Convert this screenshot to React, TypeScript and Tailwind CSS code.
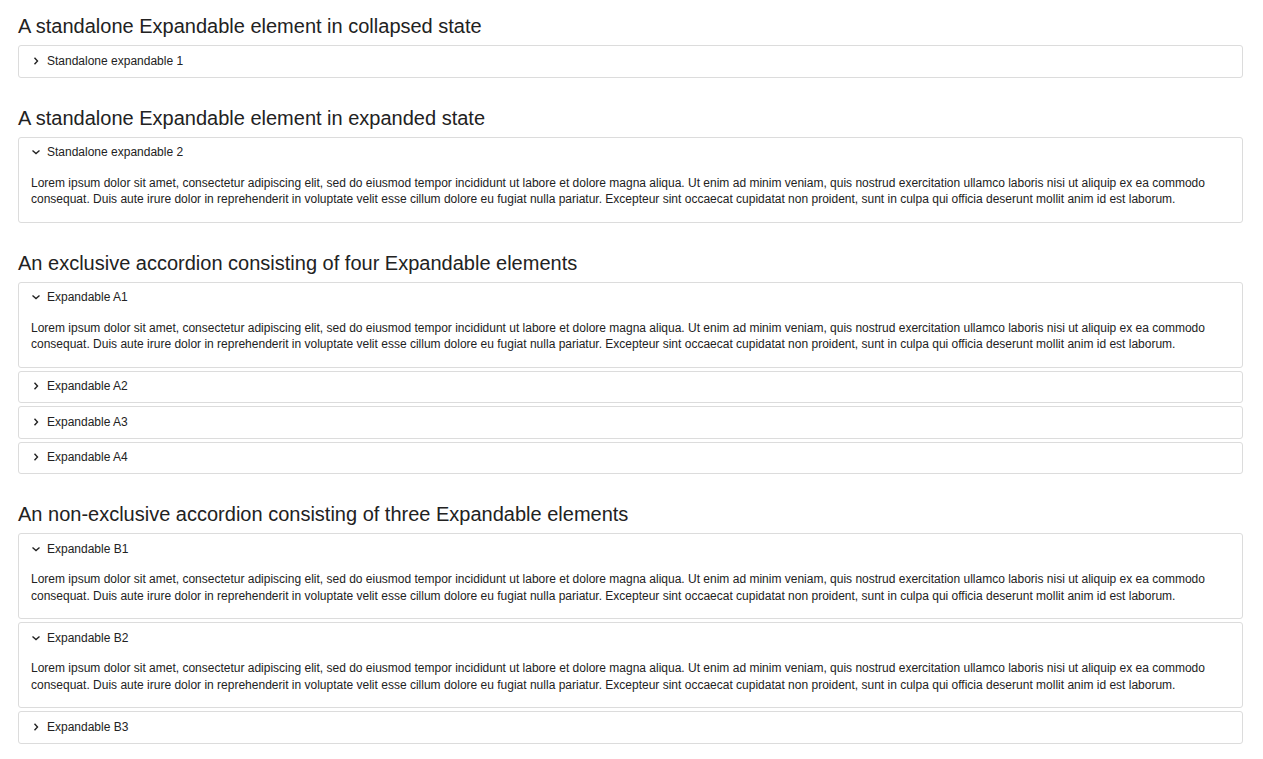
import React from 'react';

const LOREM =
  'Lorem ipsum dolor sit amet, consectetur adipiscing elit, sed do eiusmod tempor incididunt ut labore et dolore magna aliqua. Ut enim ad minim veniam, quis nostrud exercitation ullamco laboris nisi ut aliquip ex ea commodo consequat. Duis aute irure dolor in reprehenderit in voluptate velit esse cillum dolore eu fugiat nulla pariatur. Excepteur sint occaecat cupidatat non proident, sunt in culpa qui officia deserunt mollit anim id est laborum.';

const Chevron = ({ open }: { open: boolean }) => (
  <svg width="10" height="10" viewBox="0 0 10 10" className="shrink-0" aria-hidden="true">
    {open ? (
      <path d="M1.5 3.5 L5 6.5 L8.5 3.5" fill="none" stroke="#222" strokeWidth="1.4" />
    ) : (
      <path d="M3.5 1.8 L6.5 5 L3.5 8.2" fill="none" stroke="#222" strokeWidth="1.4" />
    )}
  </svg>
);

const Expandable = ({ title, open }: { title: string; open?: boolean }) => (
  <div className="border border-[#dcdcdc] rounded-[3px] bg-white">
    <div className="h-[30.5px] flex items-center pl-[12px] pb-[1px] gap-[6px] text-[12px] text-[#222]">
      <Chevron open={!!open} />
      <span>{title}</span>
    </div>
    {open && (
      <div className="pl-[12px] pr-[12px] pt-[6.5px] pb-[14px] text-[12px] leading-[16.5px] text-[#222]">{LOREM}</div>
    )}
  </div>
);

const Section = ({ heading, children }: { heading: string; children: React.ReactNode }) => (
  <section className="mb-[28px]">
    <h2 className="text-[20px] leading-[24px] text-[#222] mb-[7px]">{heading}</h2>
    <div className="flex flex-col gap-[3px]">{children}</div>
  </section>
);

export default function App() {
  return (
    <div className="min-h-screen bg-white pl-[18px] pr-[20px] pt-[14px] font-['Liberation_Sans',Arial,sans-serif]">
      <Section heading="A standalone Expandable element in collapsed state">
        <Expandable title="Standalone expandable 1" />
      </Section>
      <Section heading="A standalone Expandable element in expanded state">
        <Expandable title="Standalone expandable 2" open />
      </Section>
      <Section heading="An exclusive accordion consisting of four Expandable elements">
        <Expandable title="Expandable A1" open />
        <Expandable title="Expandable A2" />
        <Expandable title="Expandable A3" />
        <Expandable title="Expandable A4" />
      </Section>
      <Section heading="An non-exclusive accordion consisting of three Expandable elements">
        <Expandable title="Expandable B1" open />
        <Expandable title="Expandable B2" open />
        <Expandable title="Expandable B3" />
      </Section>
    </div>
  );
}
